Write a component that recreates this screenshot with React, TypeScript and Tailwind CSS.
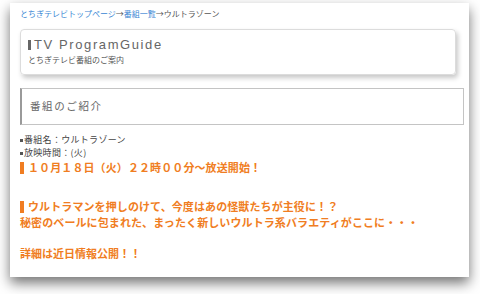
const jp = { fontFamily: '"Noto Sans CJK JP", "Noto Sans", sans-serif' }

const OrangeBar = () => (
  <span className="inline-block w-[4px] h-[12px] bg-[#f07d22] mr-[4px] align-[-2px]" />
)

const Dot = () => <span className="inline-block w-[3px] h-[3px] bg-[#555] mr-[1px] align-[1px]" />

export default function App() {
  return (
    <div className="w-[480px] h-[294px] bg-white pl-[10px] pr-[11px] pt-[3px] overflow-hidden" style={jp}>
      <div className="h-[274px] bg-white shadow-[0_6px_12px_rgba(0,0,0,0.55)] pl-[10px] pr-[5px] pt-[5px]">
        {/* breadcrumb */}
        <div className="text-[8px] leading-[12px] text-[#555]">
          <a href="#" className="text-[#3b87d4]">とちぎテレビトップページ</a>
          <span>→</span>
          <a href="#" className="text-[#3b87d4]">番組一覧</a>
          <span>→</span>
          <span>ウルトラゾーン</span>
        </div>

        {/* header box */}
        <div className="mt-[9px] mr-[8px] h-[46px] border border-[#dcdcdc] rounded-[4px] shadow-[2px_3px_5px_rgba(0,0,0,0.22)] pl-[7px] pt-[8px]">
          <div
            className="flex items-center text-[13px] leading-[14px] tracking-[1.6px] text-[#666]"
            style={{ fontFamily: '"Liberation Sans", Arial, sans-serif' }}
          >
            <span className="inline-block w-[3px] h-[10px] bg-[#666] mr-[3px]" />
            TV ProgramGuide
          </div>
          <div className="mt-[3px] text-[8px] leading-[10px] text-[#555]">とちぎテレビ番組のご案内</div>
        </div>

        {/* section title */}
        <div className="mt-[13px] h-[37px] border border-[#c4c4c4] border-l-2 border-l-[#9a9a9a] pl-[8px] pt-[10px]">
          <h2 className="text-[10.5px] leading-[14px] tracking-[1.6px] text-[#666]">番組のご紹介</h2>
        </div>

        <div className="mt-[8px] text-[9px] leading-[13px] tracking-[0.3px] text-[#444]">
          <p><Dot />番組名：ウルトラゾーン</p>
          <p><Dot />放映時間：(火)</p>
        </div>

        <div className="text-[#f07d22] font-bold text-[11px]">
          <p className="mt-[1px] leading-[14px] tracking-[0.1px]">
            <OrangeBar />１０月１８日（火）２２時００分〜放送開始！
          </p>
          <p className="mt-[24px] leading-[16px] tracking-[0.1px]">
            <OrangeBar />ウルトラマンを押しのけて、今度はあの怪獣たちが主役に！？
            <br />
            秘密のベールに包まれた、まったく新しいウルトラ系バラエティがここに・・・
          </p>
          <p className="mt-[15px] leading-[16px]">詳細は近日情報公開！！</p>
        </div>
      </div>
    </div>
  )
}
